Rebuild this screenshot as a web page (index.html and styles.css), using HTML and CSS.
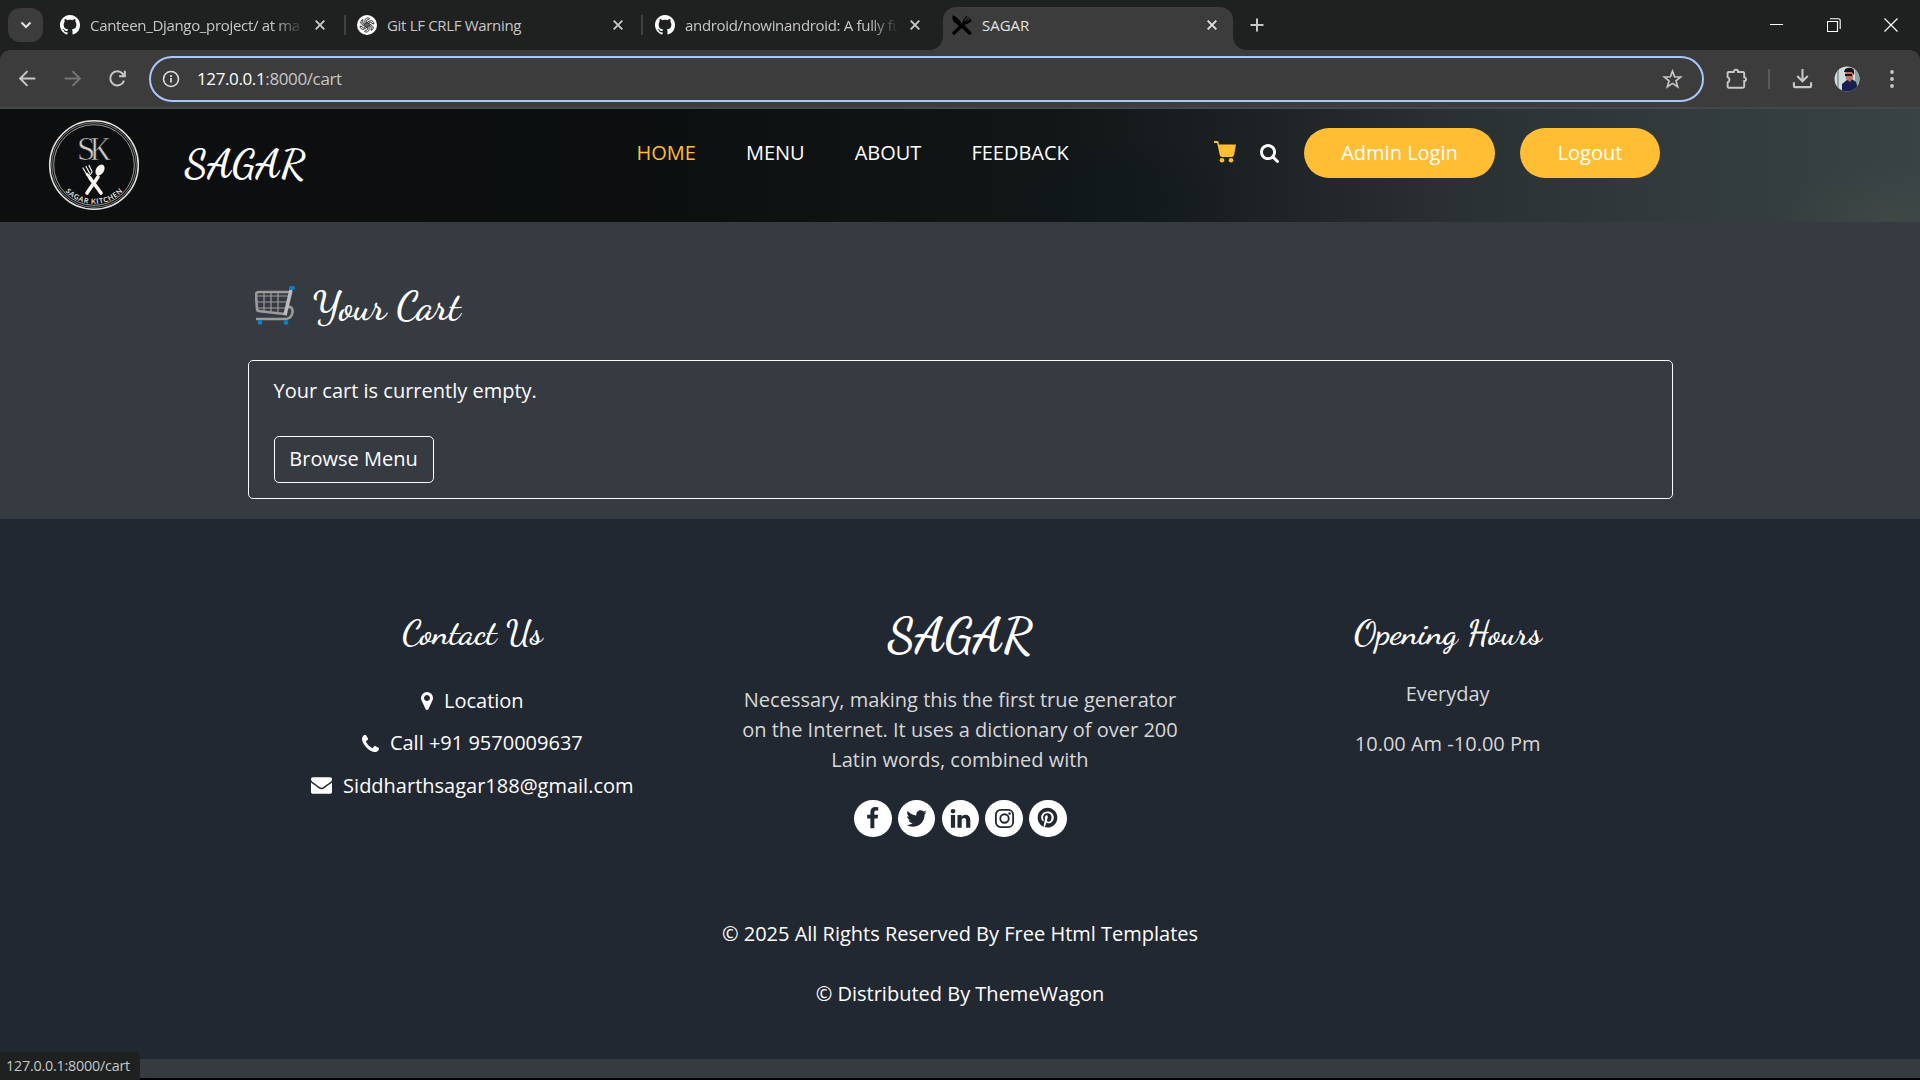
FILE: index.html
```html
<!DOCTYPE html>
<html lang="en">
<head>
<meta charset="utf-8">
<title>SAGAR</title>
<link rel="stylesheet" href="styles.css">
</head>
<body>
<svg class="defs" width="0" height="0" aria-hidden="true">
  <symbol id="github" viewBox="0 0 16 16"><path fill="#fff" d="M8 0C3.58 0 0 3.58 0 8c0 3.54 2.29 6.53 5.47 7.59.4.07.55-.17.55-.38 0-.19-.01-.82-.01-1.49-2.01.37-2.53-.49-2.69-.94-.09-.23-.48-.94-.82-1.13-.28-.15-.68-.52-.01-.53.63-.01 1.08.58 1.23.82.72 1.21 1.87.87 2.33.66.07-.52.28-.87.51-1.07-1.78-.2-3.64-.89-3.64-3.95 0-.87.31-1.59.82-2.15-.08-.2-.36-1.02.08-2.12 0 0 .67-.21 2.2.82.64-.18 1.32-.27 2-.27s1.36.09 2 .27c1.53-1.04 2.2-.82 2.2-.82.44 1.1.16 1.92.08 2.12.51.56.82 1.27.82 2.15 0 3.07-1.87 3.75-3.65 3.95.29.25.54.73.54 1.48 0 1.07-.01 1.93-.01 2.2 0 .21.15.46.55.38A8.01 8.01 0 0 0 16 8c0-4.42-3.58-8-8-8z"/></symbol>
  <symbol id="x" viewBox="0 0 12 12"><path d="M1.7 1.7l8.6 8.6M10.3 1.7l-8.6 8.6" stroke="currentColor" stroke-width="1.9" fill="none"/></symbol>
</svg>

<header class="tabstrip">
  <button class="tab-search"><svg width="12" height="8" viewBox="0 0 12 8"><path d="M1.500 1.500L6 6l4.500-4.500" fill="none" stroke="#e3e3e3" stroke-width="2"/></svg></button>
  <div class="tab tab-first">
    <svg class="fav"><use href="#github"/></svg><span class="title fade">Canteen_Django_project/ at ma</span><svg class="close"><use href="#x"/></svg>
  </div>
  <div class="tab">
    <svg class="fav" viewBox="0 0 20 20"><circle cx="10" cy="10" r="10" fill="#fff"/><g fill="none" stroke="#222" stroke-width=".85"><path id="k" d="M10 7.600L7.900 8.800V5.300a2.800 2.800 0 0 1 4.700-1.600L9.300 5.600v4.300"/><use href="#k" transform="rotate(60 10 10)"/><use href="#k" transform="rotate(120 10 10)"/><use href="#k" transform="rotate(180 10 10)"/><use href="#k" transform="rotate(240 10 10)"/><use href="#k" transform="rotate(300 10 10)"/></g></svg><span class="title">Git LF CRLF Warning</span><svg class="close"><use href="#x"/></svg>
  </div>
  <div class="tab tab-third">
    <svg class="fav"><use href="#github"/></svg><span class="title fade">android/nowinandroid: A fully fu</span><svg class="close"><use href="#x"/></svg>
  </div>
  <div class="tab active">
    <svg class="fav" viewBox="0 0 20 20"><path d="M2.500 3L17.500 18" stroke="#000" stroke-width="3.800" stroke-linecap="round"/><path d="M.5 0l.5 6 6 5 2-2z" fill="#000"/><path d="M2 18L13 7.500" stroke="#000" stroke-width="3.400" stroke-linecap="round"/><path d="M11 8.500c0-3 1.500-4.500 4-7.500M13 7l4-4.500M14 8l5-4M11.500 9c3 0 5-1 8-3.500" stroke="#000" stroke-width="1.100" fill="none"/></svg><span class="title">SAGAR</span><svg class="close"><use href="#x"/></svg>
  </div>
  <svg class="plus" width="14" height="14" viewBox="0 0 14 14"><path d="M7 .5v13M.5 7h13" stroke="#c7c7c7" stroke-width="2"/></svg>
  <div class="window-controls">
    <svg viewBox="0 0 14 14"><path d="M0 6.500h13" stroke="#fff" stroke-width="1"/></svg>
    <svg viewBox="0 0 14 14"><path d="M.5 3.500h10v10h-10zM3 .8h8.500q1.700 0 1.700 1.700V11" fill="none" stroke="#fff" stroke-width="1.100"/></svg>
    <svg viewBox="0 0 14 14"><path d="M.5.5l13 13M13.500.5l-13 13" stroke="#fff" stroke-width="1.200"/></svg>
  </div>
</header>

<nav class="toolbar">
  <svg class="tool" viewBox="0 0 20 20"><path d="M17.500 10H3.500M10 3L3 10l7 7" fill="none" stroke="#c7c7c7" stroke-width="1.900"/></svg>
  <svg class="tool" viewBox="0 0 20 20"><path d="M2.500 10h14M10 3l7 7-7 7" fill="none" stroke="#757575" stroke-width="1.900"/></svg>
  <svg class="tool" viewBox="0 0 20 20"><path d="M16.200 12a6.700 6.700 0 1 1-1.300-6.500l1.600 1.700M17 2.500v5.300h-5.500" fill="none" stroke="#c7c7c7" stroke-width="1.900"/></svg>
  <div class="omnibox">
    <svg class="info" viewBox="0 0 18 18"><circle cx="9" cy="9" r="7.500" fill="none" stroke="#dedede" stroke-width="1.600"/><path d="M9 8v4.600M9 5v1.900" stroke="#dedede" stroke-width="1.700"/></svg>
    <span class="url"><b>127.0.0.1</b>:8000/cart</span>
    <svg class="star" viewBox="0 0 20 20"><path d="M10 2l2 5.400 5.800.3-4.500 3.600 1.600 5.600L10 13.700l-4.900 3.200 1.600-5.600L2.200 7.700 8 7.400z" fill="none" stroke="#c7c7c7" stroke-width="1.600"/></svg>
  </div>
  <svg class="ext" viewBox="0 0 22 22"><path d="M3.500 4h4.200a2.200 2.200 0 0 1 4.400 0H17a1.200 1.200 0 0 1 1.200 1.200v4.100a1.800 1.800 0 0 1 0 3.700v5.500A1.200 1.200 0 0 1 17 19.700H2.800A1.200 1.200 0 0 1 1.600 18.500v-4a2.900 2.900 0 0 0 0-5.400V5A1 1 0 0 1 2.600 4z" fill="none" stroke="#c7c7c7" stroke-width="1.900"/></svg>
  <i class="sep"></i>
  <svg class="download" viewBox="0 0 22 22"><path d="M11 1v13M5.500 8.500L11 14l5.500-5.500M2 15v3.800q0 1.200 1.200 1.200h15.600q1.200 0 1.200-1.200V15" fill="none" stroke="#c7c7c7" stroke-width="2.200"/></svg>
  <svg class="avatar" viewBox="0 0 26 26"><clipPath id="ac"><circle cx="13" cy="13" r="12.500"/></clipPath><g clip-path="url(#ac)"><path fill="#cfdcda" d="M0 0h26v26H0z"/><path fill="#8fa3a4" d="M3 0h2v26H3zM21 0h5v20h-5z"/><path fill="#181f4e" d="M8 26l0-8 5-4 5-1 4 3 3 10z"/><path fill="#b9756a" d="M11 5h8v7l-3 4-4-3z"/><path fill="#16131f" d="M10 6q1-5 7-4 4 0 3 7l-2-3h-6zM11 8h7v2h-7z"/></g></svg>
  <svg class="menu" viewBox="0 0 4 18"><g fill="#c7c7c7"><circle cx="2" cy="2" r="1.900"/><circle cx="2" cy="9" r="1.900"/><circle cx="2" cy="16" r="1.900"/></g></svg>
</nav>

<main class="page">
  <section class="site-header">
    <svg class="logo" viewBox="0 0 92 92">
      <g fill="none" stroke="#e4e2de"><circle cx="46" cy="46" r="44.300" stroke-width="1.500"/><circle cx="46" cy="46" r="42.300" stroke-width=".9" stroke="#8a8988"/><circle cx="46" cy="46" r="40.300" stroke-width=".9" stroke="#aaa8a5"/></g>
      <text class="logo-sk" x="29" y="41">S</text><text class="logo-sk" x="42" y="41" textLength="21" lengthAdjust="spacingAndGlyphs">K</text>
      <g stroke="#faf6ef" fill="#faf6ef" stroke-linecap="round"><path d="M42 59l11 15M50 58L39 74" stroke-width="3.600"/><path d="M43 61l-4-6" stroke-width="2.500"/><ellipse cx="52" cy="51" rx="4" ry="6" transform="rotate(30 52 51)" stroke="none"/><path d="M35 49l4 7M38 47.500l3.500 6.500M41 46.500l3 6M38.500 55.500q2.500 3 5.500-2.500" fill="none" stroke-width="1.200"/></g>
      <path id="arc" d="M16 71A39.500 39.500 0 0 0 77 70" fill="none"/>
      <text class="logo-ring"><textPath href="#arc" startOffset="2" textLength="64">SAGAR KITCHEN</textPath></text>
    </svg>
    <a class="script brand">SAGAR</a>
    <div class="links"><a class="current">HOME</a><a>MENU</a><a>ABOUT</a><a>FEEDBACK</a></div>
    <div class="actions">
      <svg class="cart" viewBox="0 0 22 22"><path fill="#ffbe33" d="M0 0h3.300q1 0 1.200 1l.6 2.500H22l-1.700 9.500q-.5 3-2.500 3H8q-2 0-2.500-3L3.200 2H0z"/><circle cx="8" cy="19.300" r="2.300" fill="#ffbe33"/><circle cx="17" cy="19.300" r="2.300" fill="#ffbe33"/></svg>
      <svg class="search" viewBox="64 128 1664 1664"><path fill="#fff" d="M1216 832q0-185-131.500-316.500t-316.500-131.500-316.500 131.500-131.500 316.500 131.500 316.500 316.500 131.500 316.500-131.500 131.500-316.500zm512 832q0 52-38 90t-90 38q-54 0-90-38l-343-342q-179 124-399 124-143 0-273.500-55.500t-225-150-150-225-55.500-273.500 55.500-273.500 150-225 225-150 273.500-55.500 273.500 55.500 225 150 150 225 55.500 273.500q0 220-124 399l343 343q37 37 37 90z"/></svg>
      <a class="pill admin">Admin Login</a><a class="pill logout">Logout</a>
    </div>
  </section>

  <section class="cart-section">
    <h2 class="cart-heading">
      <svg class="trolley" viewBox="0 0 40 40"><g fill="none" stroke="#9b9b9b" stroke-width="1.200"><path d="M2 10h32M2 16h31M3 22h29M9 6v19M16 6v20M23 6v21"/></g><path d="M35 6H4Q1 6 1 9l1 14q0 2 3 2.200l27 3M32 21q6-1 5.500 5Q37 32 31 33H1" fill="none" stroke="#9b9b9b" stroke-width="2.600"/><path d="M36 4l-6 25" stroke="#bcbcbc" stroke-width="3.500"/><g fill="#0d7fc6"><rect x="34" y="0" width="6" height="4" rx="2"/><circle cx="5" cy="36.500" r="2.400"/><circle cx="31" cy="36.500" r="2.400"/></g></svg>
      <span class="script yourcart">Your Cart</span>
    </h2>
    <div class="alert"><p>Your cart is currently empty.</p><a class="browse">Browse Menu</a></div>
  </section>

  <footer class="footer">
    <div class="columns">
      <div class="col contact">
        <h4 class="script">Contact Us</h4>
        <a><svg width="12" height="18" viewBox="384 128 1024 1536"><path d="M1152 640q0-106-75-181t-181-75-181 75-75 181 75 181 181 75 181-75 75-181zm256 0q0 109-33 179l-364 774q-16 33-47.500 52t-67.500 19-67.500-19-46.500-52l-365-774q-33-70-33-179 0-212 150-362t362-150 362 150 150 362z"/></svg><span>Location</span></a>
        <a><svg width="17" height="17" viewBox="192 128 1408 1408"><path d="M1600 1240q0 27-10 70.500t-21 68.500q-21 50-122 106-94 51-186 51-27 0-53-3.500t-57.500-12.500-47-14.500-55.500-20.500-49-18q-98-35-175-83-127-79-264-216t-216-264q-48-77-83-175-3-9-18-49t-20.500-55.500-14.500-47-12.500-57.500-3.500-53q0-92 51-186 56-101 106-122 25-11 68.500-21t70.500-10q14 0 21 3 18 6 53 76 11 19 30 54t35 63.500 31 53.500q3 4 17.500 25t21.500 35.500 7 28.500q0 20-28.500 50t-62 55-62 53-28.500 46q0 9 5 22.500t8.500 20.500 14 24 11.500 19q76 137 174 235t235 174q2 1 19 11.500t24 14 20.500 8.500 22.500 5q18 0 46-28.500t53-62 55-62 50-28.500q14 0 28.500 7t35.500 21.500 25 17.500q25 15 53.500 31t63.500 35 54 30q70 35 76 53 3 7 3 21z"/></svg><span>Call +91 9570009637</span></a>
        <a><svg width="21" height="17" viewBox="0 256 1792 1408"><path d="M1792 710v794q0 66-47 113t-113 47h-1472q-66 0-113-47t-47-113v-794q44 49 101 87 362 246 497 345 57 42 92.500 65.500t94.500 48 110 24.500h2q51 0 110-24.500t94.500-48 92.500-65.500q170-123 498-345 57-39 100-87zm0-294q0 79-49 151t-122 123q-376 261-468 325-10 7-42.500 31t-54 38.500-52 32.500-57.500 27-50 9h-2q-23 0-50-9t-57.500-27-52-32.500-54-38.500-42.500-31q-91-64-262-182.500t-205-142.500q-62-42-117-115.500t-55-136.500q0-78 41.500-130t118.500-52h1472q65 0 112.500 47t47.500 113z"/></svg><span>Siddharthsagar188@gmail.com</span></a>
      </div>
      <div class="col about">
        <a class="script footer-logo">SAGAR</a>
        <p>Necessary, making this the first true generator on the Internet. It uses a dictionary of over 200 Latin words, combined with</p>
        <div class="social">
          <a><svg viewBox="0 0 1792 1792"><path d="M1343 12v264h-157q-86 0-116 36t-30 108v189h293l-39 296h-254v759h-306v-759h-255v-296h255v-218q0-186 104-288.500t277-102.500q147 0 228 12z"/></svg></a>
          <a><svg viewBox="0 0 1792 1792"><path d="M1684 408q-67 98-162 167 1 14 1 42 0 130-38 259.500t-115.500 248.500-184.500 210.500-258 146-323 54.500q-271 0-496-145 35 4 78 4 225 0 401-138-105-2-188-64.500t-114-159.500q33 5 61 5 43 0 85-11-112-23-185.500-111.500t-73.500-205.500v-4q68 38 146 41-66-44-105-115t-39-154q0-88 44-163 121 149 294.500 238.500t371.500 99.500q-8-38-8-74 0-134 94.500-228.500t228.500-94.500q140 0 236 102 109-21 205-78-37 115-142 178 93-10 186-50z"/></svg></a>
          <a><svg viewBox="0 0 1792 1792"><path d="M477 625v991h-330v-991h330zm21-306q1 73-50.500 122t-135.500 49h-2q-82 0-132-49t-50-122q0-74 51.500-122.500t134.500-48.500 133 48.500 51 122.500zm1166 729v568h-329v-530q0-105-40.500-164.500t-126.500-59.500q-63 0-105.500 34.500t-63.500 85.500q-11 30-11 81v553h-329q2-399 2-647t-1-296l-1-48h329v144h-2q20-32 41-56t56.500-52 87-43.500 114.500-15.500q171 0 275 113.500t104 332.500z"/></svg></a>
          <a><svg viewBox="-1 -1 24 24"><rect x="2" y="2" width="18" height="18" rx="5" fill="none" stroke="#222831" stroke-width="1.900"/><circle cx="11" cy="11" r="4.400" fill="none" stroke="#222831" stroke-width="1.900"/><circle cx="16.300" cy="5.800" r="1.300"/></svg></a>
          <a><svg viewBox="-2 -1 28 28"><path d="M12 0C5.373 0 0 5.372 0 12c0 5.084 3.163 9.426 7.627 11.174-.105-.949-.2-2.405.042-3.441.218-.937 1.407-5.965 1.407-5.965s-.359-.719-.359-1.782c0-1.668.967-2.914 2.171-2.914 1.023 0 1.518.769 1.518 1.690 0 1.029-.655 2.568-.994 3.995-.283 1.194.599 2.169 1.777 2.169 2.133 0 3.772-2.249 3.772-5.495 0-2.873-2.064-4.882-5.012-4.882-3.414 0-5.418 2.561-5.418 5.207 0 1.031.397 2.138.893 2.738a.36.36 0 0 1 .083.345l-.333 1.360c-.053.22-.174.267-.402.161-1.499-.698-2.436-2.889-2.436-4.649 0-3.785 2.750-7.262 7.929-7.262 4.163 0 7.398 2.967 7.398 6.931 0 4.136-2.607 7.464-6.227 7.464-1.216 0-2.359-.631-2.750-1.378l-.748 2.853c-.271 1.043-1.002 2.350-1.492 3.146C9.570 23.812 10.763 24 12 24c6.627 0 12-5.373 12-12 0-6.628-5.373-12-12-12z"/></svg></a>
        </div>
      </div>
      <div class="col hours">
        <h4 class="script">Opening Hours</h4>
        <p>Everyday</p><p>10.00 Am -10.00 Pm</p>
      </div>
    </div>
    <div class="legal"><p>© 2025 All Rights Reserved By Free Html Templates</p><p>© Distributed By ThemeWagon</p></div>
  </footer>
</main>
<div class="status">127.0.0.1:8000/cart</div>
</body>
</html>
```
FILE: styles.css
```css
* { box-sizing: border-box; }
body {
  margin: 0; width: 1920px; height: 1080px; overflow: hidden;
  display: flex; flex-direction: column;
  background: #000; color: #fff;
  font: 20px/30px "Open Sans", sans-serif;
}
svg { display: block; flex: none; }
p { margin: 0; }
.defs { position: absolute; }

/* Browser tabs */
.tabstrip {
  height: 50px; flex: none; display: flex; align-items: center;
  background: #1f2120; padding-left: 8px;
  font-size: 15px; line-height: 20px; letter-spacing: -.32px;
  box-shadow: 0 12px 0 #1f2120;
}
.tab-search {
  width: 35px; height: 34px; border: 0; padding: 0; border-radius: 12px;
  background: #3c3c3c; display: grid; place-items: center;
}
.tab {
  width: 297px; height: 50px; padding: 0 19.5px 0 11px;
  display: flex; align-items: center; position: relative; color: #c7c7c7;
}
.tab-first { width: 303px; padding: 0 20px 0 17px; }
.tab-third { width: 300px; padding: 0 22px 0 12px; }
.tab:not(.active)::after {
  content: ""; position: absolute; right: 0; top: 15px;
  width: 2px; height: 20px; background: #3f4140;
}
.tab-third:not(.active)::after { display: none; }
.fav { width: 20px; height: 20px; }
.title { flex: 1; min-width: 0; margin: 0 10px; white-space: nowrap; }
.fade { -webkit-mask-image: linear-gradient(90deg, #000 86%, transparent); mask-image: linear-gradient(90deg, #000 86%, transparent); }
.close { width: 12px; height: 12px; }
.tab.active {
  width: 290px; height: 43px; margin-top: 7px; padding: 0 15px 7px 9px;
  background: #3c3c3c; border-radius: 13px 13px 0 0; color: #e3e3e3;
  z-index: 2; letter-spacing: 0;
}
.active::before, .active::after {
  content: ""; position: absolute; bottom: 0; width: 13px; height: 13px;
}
.active::before { left: -13px; background: radial-gradient(circle at 0 0, transparent 12.5px, #3c3c3c 13px); }
.tab.active::after { right: -13px; background: radial-gradient(circle at 100% 0, transparent 12.5px, #3c3c3c 13px); }
.plus { margin-left: 17px; }
.window-controls { margin-left: auto; padding-right: 22px; display: flex; gap: 43px; }
.window-controls svg { width: 14px; height: 14px; }

/* Address bar */
.toolbar {
  height: 59px; flex: none; display: flex; align-items: center;
  padding: 0 26px 0 17px; background: #3c3c3c; position: relative;
  border-bottom: 2px solid #474948; border-radius: 10px 10px 0 0;
}
.tool { width: 21px; height: 21px; margin-right: 24px; }
.omnibox {
  width: 1555px; height: 46px; margin: 1px 0 0 -3px; flex: none;
  border: 2.5px solid #a8c7fa; border-radius: 23px;
  display: flex; align-items: center; padding: 0 19px 0 11px;
}
.info { width: 18px; height: 18px; }
.url { flex: 1; margin-left: 17px; font-size: 17px; letter-spacing: -.38px; color: #c7c7c7; }
.url b { font-weight: 400; color: #fff; }
.star { width: 21px; height: 21px; }
.ext { width: 22px; height: 22px; margin-left: 22px; }
.sep { flex: none; width: 2px; height: 20px; margin-left: 20px; background: #5a5a5a; }
.download { width: 21px; height: 21px; margin-left: 21.5px; }
.avatar { width: 26px; height: 26px; margin-left: 21.5px; }
.menu { width: 4px; height: 18px; margin-left: 30px; }

/* Site header */
.page { height: 969px; flex: none; background: #363a41; }
.site-header {
  height: 113px; display: flex; align-items: flex-start; padding-left: 48px;
  background:
    radial-gradient(ellipse 110px 60px at 1890px 113px, rgba(76,80,80,.35), transparent),
    radial-gradient(ellipse 130px 60px at 1120px 90px, rgba(14,24,26,.5), transparent),
    linear-gradient(90deg, #0c0e10 0, #0d1011 36%, #111617 55%, #1c2124 65%, #2a3032 75%, #323a3b 87%, #394343 100%);
}
.logo { width: 92px; height: 92px; margin-top: 10px; }
.logo-sk { font: 33px "Liberation Serif", serif; fill: #cfcdc9; stroke: #0c0e10; stroke-width: .6px; }
.logo-ring { font: 700 7px "Lato", sans-serif; fill: #e8e5e0; }
.script { margin: 0; font-family: "Dancing Script", cursive; font-weight: 600; white-space: nowrap; }
.brand { width: 124px; margin: 25px 0 0 44.5px; font-size: 40px; line-height: 60px; font-weight: 700; }
.links { display: flex; gap: 50px; margin: 29px 0 0 328px; }
.links .current { color: #ffbe33; }
.actions { display: flex; align-items: center; margin: 19px 260px 0 auto; }
.cart { width: 22px; height: 22px; margin-top: -3px; }
.search { width: 19px; height: 19px; margin: 0 25px 0 24px; }
.pill { height: 50px; line-height: 50px; border-radius: 25px; background: #ffbe33; text-align: center; }
.admin { width: 191px; margin-right: 25px; }
.logout { width: 140px; }

/* Cart */
.cart-section { height: 297px; padding: 60px 247px 20px 248px; }
.cart-heading { margin: 0 0 24px; height: 54px; padding: 4px 0 0 7px; display: flex; }
.trolley { width: 40px; height: 40px; }
.yourcart { margin: -4px 0 0 17.5px; font-size: 40px; line-height: 48px; }
.alert { height: 139px; border: 1px solid #fff; border-radius: 5px; padding: 15px 24.5px; display: flex; flex-direction: column; align-items: flex-start; gap: 30px; }
.browse { width: 160px; height: 47px; line-height: 44px; border: 1px solid #fff; border-radius: 5px; text-align: center; }

/* Footer */
.footer { height: 540px; background: #222831; padding-top: 93px; text-align: center; }
.columns { width: 1463px; margin: 0 auto; display: grid; grid-template-columns: repeat(3, 1fr); height: 290px; }
.col { display: flex; flex-direction: column; align-items: center; }
.col h4 { height: 46px; font-size: 35px; line-height: 42px; }
.contact a { display: flex; align-items: center; justify-content: center; gap: 11px; height: 30px; margin-bottom: 12.5px; }
.contact a svg { fill: #fff; }
.contact .script { margin-bottom: 27.5px; }
.about .footer-logo { height: 54px; margin-bottom: 19px; font-size: 48px; line-height: 48px; font-weight: 700; }
.about p { width: 450px; color: #d7d7d8; }
.social { display: flex; gap: 6.25px; margin: 24.5px 0 0 1px; }
.social a { width: 37.5px; height: 37.5px; border-radius: 50%; background: #fff; display: grid; place-items: center; }
.social svg { width: 23px; height: 23px; fill: #222831; }
.hours .script { margin-bottom: 21px; }
.hours p { color: #d7d7d8; margin-bottom: 20px; }
.legal { display: flex; flex-direction: column; gap: 30px; padding-top: 17px; }

/* Link target shown on hover */
.status {
  position: absolute; left: 0; bottom: 0; width: 140px; height: 28px;
  padding: 0 6px; background: #1f2120; color: #c7c7c7; border-radius: 0 5px 0 0;
  font-size: 14.3px; line-height: 27px; letter-spacing: -.2px; white-space: nowrap;
}
```
